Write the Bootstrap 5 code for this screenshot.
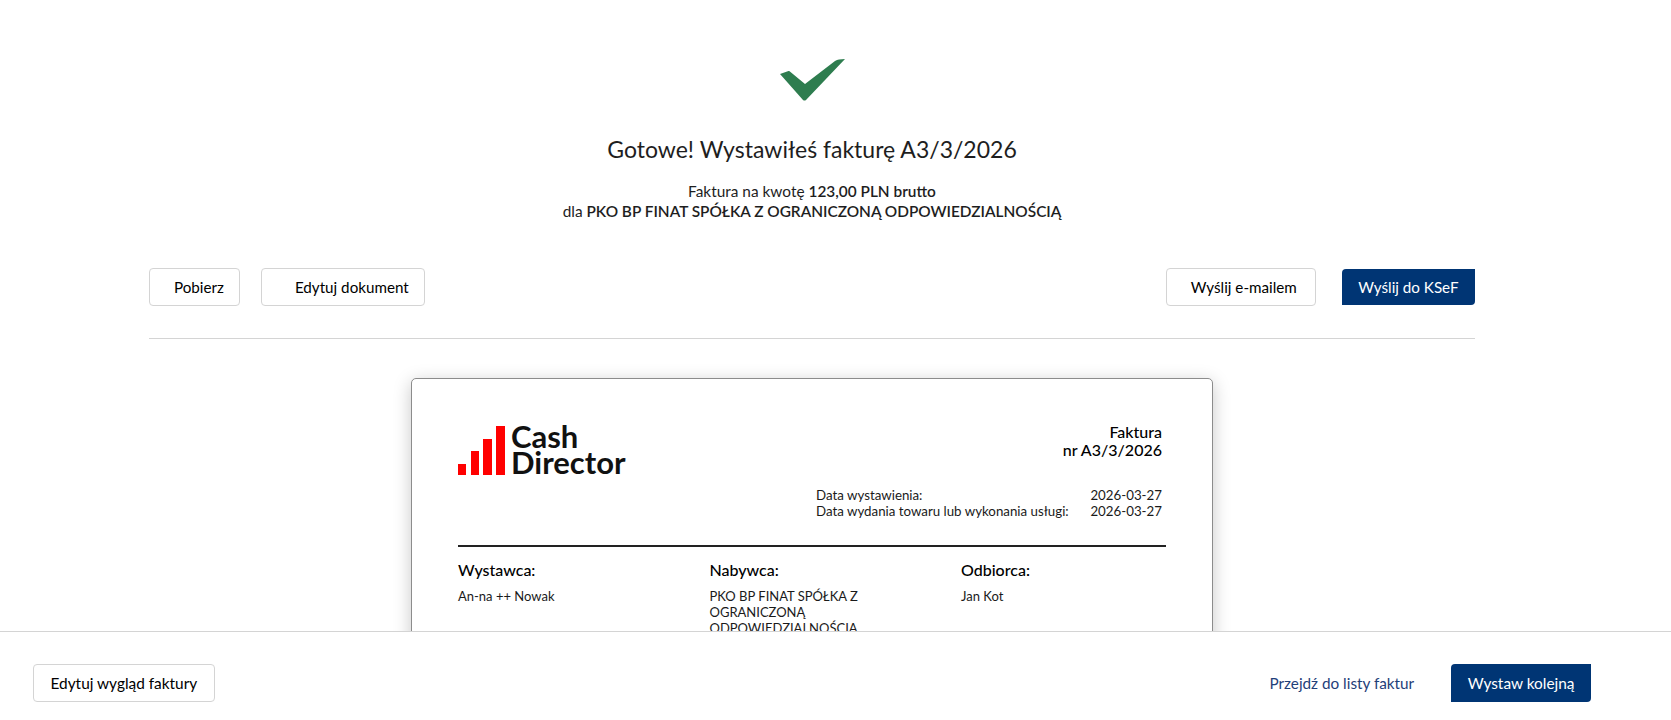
<!doctype html>
<html lang="pl">

<head>
    <meta charset="UTF-8">
    <meta name="viewport" content="width=device-width, initial-scale=1">
    <title>Faktura wystawiona</title>
    <link href="https://cdn.jsdelivr.net/npm/bootstrap@5.3.3/dist/css/bootstrap.min.css" rel="stylesheet">
    <style>
        html, body {
            height: 100%;
            overflow: hidden;
        }

        body {
            font-family: "Lato", "Noto Sans", sans-serif;
            font-size: 15px;
            color: #1e1e1e;
            background: #fff;
        }

        .page-wrap {
            height: 720px;
            overflow: hidden;
            padding: 59px 196px 0 149px;
        }

        .done-check {
            display: block;
            width: 65px;
            height: 42px;
            margin: 0 auto 32px;
        }

        .done-title {
            font-size: 23px;
            font-weight: 400;
            line-height: 32px;
            margin-bottom: 16px;
        }

        .done-sub {
            font-size: 15.4px;
            line-height: 20px;
            margin-bottom: 47px;
        }

        .done-sub b {
            font-weight: 600;
        }

        .btn-plain,
        .btn-navy {
            font-size: 15.2px;
            line-height: 20px;
            padding: 8px 15px;
            height: 38px;
        }

        .btn-plain {
            background: #fff;
            color: #000;
            border: 1px solid #d4d4d4;
            border-radius: 4px;
        }

        .btn-plain.with-icon {
            padding-left: 24px;
        }

        .btn-plain.with-icon-wide {
            padding-left: 33px;
        }

        .btn-plain.mail-btn {
            padding-right: 18px;
        }

        .btn-navy {
            background: #003574;
            color: #fff;
            border: 0;
            border-radius: 4px 0 4px 0;
        }

        .btn-navy:hover {
            background: #003574;
            color: #fff;
        }

        .btn-navy.btn-short {
            height: 36px;
            padding: 7px 16.5px;
        }

        .bottom-bar .btn-plain,
        .bottom-bar .btn-navy {
            font-size: 15.4px;
            padding-left: 16.5px;
            padding-right: 16.5px;
        }

        .gap-narrow {
            margin-right: 21px;
        }

        .gap-wide {
            margin-right: 26px;
        }

        .action-rule {
            border-top: 1px solid #d4d4d4;
            margin: 32px 0 39px;
            opacity: 1;
        }

        .invoice-sheet {
            width: 802px;
            height: 520px;
            margin: 0 auto;
            padding: 44px 46px 0 46px;
            border: 1px solid #8c8c8c;
            border-radius: 5px;
            box-shadow: 0 4px 18px rgba(0, 0, 0, .22);
            font-size: 13px;
            line-height: 16px;
            color: #1a1a1a;
        }

        .logo-bars {
            width: 47px;
            height: 49px;
            margin-right: 6px;
        }

        .logo-text {
            font-family: "Lato", sans-serif;
            font-weight: 700;
            font-size: 31px;
            line-height: 26px;
            color: #111;
        }

        .inv-name {
            font-size: 16px;
            line-height: 18px;
            font-weight: 500;
            color: #000;
            padding-right: 4px;
        }

        .inv-dates {
            width: 346px;
            margin: 12px 4px 0 auto;
            font-size: 13.3px;
        }

        .inv-rule {
            border-top: 2px solid #222;
            margin: 26px 0 14px;
            opacity: 1;
        }

        .party-col {
            flex: 0 0 251.5px;
        }

        .party-head {
            font-size: 16px;
            line-height: 18px;
            font-weight: 500;
            color: #000;
            margin-bottom: 9px;
        }

        .party-text {
            width: 170px;
        }

        .bottom-bar {
            height: 89px;
            background: #fff;
            border-top: 1px solid #d4d4d4;
            padding: 32px 80px 0 33px;
        }

        .list-link {
            color: #1f4079;
            font-size: 15.3px;
            text-decoration: none;
            margin-right: 37px;
        }
    </style>
</head>

<body>
    <div class="page-wrap">
        <svg class="done-check" viewBox="0 0 65 42">
            <path d="M0 15 L8.500 12 Q9.500 11.800 10.500 13 L25 25 L55 2 Q57 .5 59 .5 L65 0 L26 41 Q24.500 42 23 41 Z" fill="#2e7d4f"/>
        </svg>
        <h1 class="done-title text-center">Gotowe! Wystawiłeś fakturę A3/3/2026</h1>
        <p class="done-sub text-center">
            Faktura na kwotę <b>123,00 PLN brutto</b><br>
            dla <b>PKO BP FINAT SPÓŁKA Z OGRANICZONĄ ODPOWIEDZIALNOŚCIĄ</b>
        </p>

        <div class="d-flex align-items-center">
            <button class="btn btn-plain with-icon gap-narrow" type="button">Pobierz</button>
            <button class="btn btn-plain with-icon-wide" type="button">Edytuj dokument</button>
            <button class="btn btn-plain with-icon mail-btn ms-auto gap-wide" type="button">Wyślij e-mailem</button>
            <button class="btn btn-navy btn-short" type="button">Wyślij do KSeF</button>
        </div>

        <hr class="action-rule">

        <div class="invoice-sheet bg-white">
            <div class="d-flex justify-content-between">
                <div class="d-flex align-items-end">
                    <svg class="logo-bars" viewBox="0 0 47 49">
                        <rect x="0" y="38" width="8" height="11" fill="#f00"/>
                        <rect x="13" y="25" width="8" height="24" fill="#f00"/>
                        <rect x="25" y="13" width="9" height="36" fill="#f00"/>
                        <rect x="38" y="0" width="9" height="49" fill="#f00"/>
                    </svg>
                    <div class="logo-text">Cash<br>Director</div>
                </div>
                <div class="inv-name text-end">Faktura<br>nr A3/3/2026</div>
            </div>

            <div class="inv-dates">
                <div class="d-flex justify-content-between"><span>Data wystawienia:</span><span>2026-03-27</span></div>
                <div class="d-flex justify-content-between"><span>Data wydania towaru lub wykonania usługi:</span><span>2026-03-27</span></div>
            </div>

            <hr class="inv-rule">

            <div class="d-flex">
                <div class="party-col">
                    <div class="party-head">Wystawca:</div>
                    <div class="party-text">An-na ++ Nowak</div>
                </div>
                <div class="party-col">
                    <div class="party-head">Nabywca:</div>
                    <div class="party-text">PKO BP FINAT SPÓŁKA Z OGRANICZONĄ ODPOWIEDZIALNOŚCIĄ</div>
                </div>
                <div class="party-col">
                    <div class="party-head">Odbiorca:</div>
                    <div class="party-text">Jan Kot</div>
                </div>
            </div>
        </div>
    </div>

    <div class="bottom-bar fixed-bottom d-flex justify-content-between align-items-start">
        <button class="btn btn-plain" type="button">Edytuj wygląd faktury</button>
        <div class="d-flex align-items-center">
            <a class="list-link" href="#">Przejdź do listy faktur</a>
            <button class="btn btn-navy" type="button">Wystaw kolejną</button>
        </div>
    </div>
</body>

</html>
